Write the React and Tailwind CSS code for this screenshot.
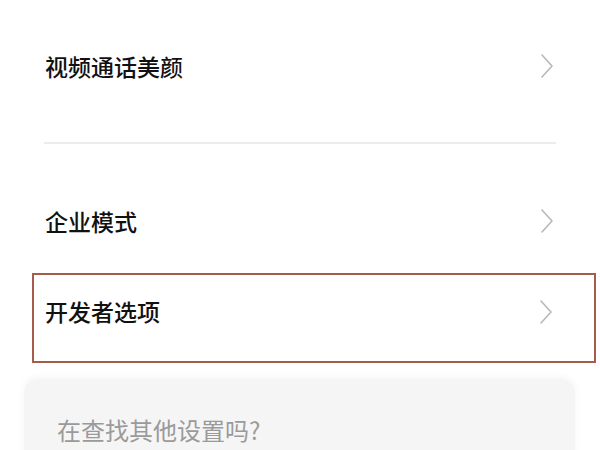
import React from 'react'

function Chevron() {
    return (
        <svg width="14" height="26" viewBox="0 0 14 26" fill="none" className="shrink-0">
            <path d="M2 2 L12 13 L2 24" stroke="#b8b8b8" strokeWidth="1.6" strokeLinecap="round" strokeLinejoin="round" />
        </svg>
    )
}

export default function App() {
    const font = { fontFamily: '"Noto Sans CJK SC", "Noto Sans", sans-serif' }

    return (
        <div className="w-[600px] h-[450px] bg-white overflow-hidden" style={font}>
            <div className="h-[132px] flex items-center justify-between pl-[45px] pr-[46px]">
                <span className="text-[23px] font-medium text-[#111]">视频通话美颜</span>
                <Chevron />
            </div>
            <div className="mt-[10px] ml-[44px] mr-[44px] h-[2px] bg-[#ececec]"></div>
            <div className="mt-[52px] h-[50px] flex items-center justify-between pl-[45px] pr-[46px]">
                <span className="text-[23px] font-medium text-[#111]">企业模式</span>
                <Chevron />
            </div>
            <div className="mt-[27px] ml-[32px] mr-[4px] h-[90px] border-2 border-[#a65c4a] flex items-center justify-between pl-[11px] pr-[41px] pb-[13px]">
                <span className="text-[23px] font-medium text-[#111]">开发者选项</span>
                <Chevron />
            </div>
            <div className="mt-[16px] ml-[24px] mr-[25px] h-[80px] bg-[#f5f5f5] rounded-t-[14px] shadow-[0_-2px_8px_rgba(0,0,0,0.04)] pl-[33px] pt-[33px]">
                <span className="text-[24px] text-[#9a9a9a]">在查找其他设置吗?</span>
            </div>
        </div>
    )
}
